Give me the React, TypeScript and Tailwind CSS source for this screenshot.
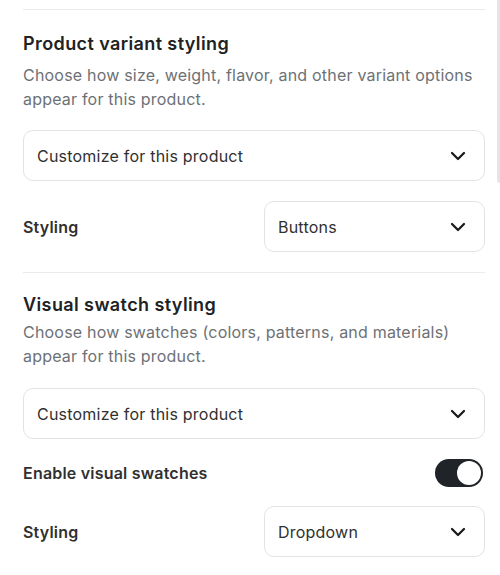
import { ChevronDown } from 'lucide-react';

interface SelectBoxProps {
    value: string;
}

const SelectBox = ({ value }: SelectBoxProps) => {
    return (
        <div className="flex h-[51px] items-center justify-between rounded-[10px] border border-[#e3e3e3] bg-white pl-[13px] pr-[14px]">
            <span className="text-[16px] tracking-[0.22px] text-[#303030]">{value}</span>
            <ChevronDown size={24} strokeWidth={2.25} className="text-[#1a1a1a]" />
        </div>
    );
};

const StylingRow = ({ value }: SelectBoxProps) => {
    return (
        <div className="grid grid-cols-2 items-center gap-5">
            <span className="text-[16px] font-semibold tracking-[0.2px] text-[#303030]">Styling</span>
            <SelectBox value={value} />
        </div>
    );
};

const Toggle = ({ on }: { on: boolean }) => {
    return (
        <div className={`flex h-7 w-12 items-center rounded-full p-[2px] ${on ? 'justify-end bg-[#202327]' : 'justify-start bg-[#d4d4d4]'}`}>
            <div className="h-6 w-6 rounded-full bg-white" />
        </div>
    );
};

export default function App() {
    return (
        <div className="relative h-[575px] w-[500px] overflow-hidden bg-white" style={{ fontFamily: 'Inter, "Noto Sans", sans-serif' }}>
            {/* scrollbar thumb */}
            <div className="absolute right-0 top-0 h-[183px] w-[3px] rounded-bl-sm bg-[#e5e5e5]" />

            <div className="ml-[23px] w-[462px] pt-[9px]">
                <div className="h-px bg-[#ebebeb]" />

                {/* Product variant styling */}
                <section className="pt-5 pb-5">
                    <h2 className="text-[18px] font-semibold leading-7 tracking-[0.4px] text-[#202223]">Product variant styling</h2>
                    <p className="mt-[5px] text-[16px] leading-6 tracking-[0.2px] text-[#6d7175]">
                        Choose how size, weight, flavor, and other variant options appear for this product.
                    </p>
                    <div className="mt-[19px]">
                        <SelectBox value="Customize for this product" />
                    </div>
                    <div className="mt-5">
                        <StylingRow value="Buttons" />
                    </div>
                </section>

                <div className="h-px bg-[#ebebeb]" />

                {/* Visual swatch styling */}
                <section className="pt-[18px]">
                    <h2 className="text-[18px] font-semibold leading-7 tracking-[0.4px] text-[#202223]">Visual swatch styling</h2>
                    <p className="mt-px text-[16px] leading-6 tracking-[0.2px] text-[#6d7175]">
                        Choose how swatches (colors, patterns, and materials) appear for this product.
                    </p>
                    <div className="mt-5">
                        <SelectBox value="Customize for this product" />
                    </div>
                    <div className="mt-5 flex h-7 items-center justify-between pr-[2px]">
                        <span className="text-[16px] font-semibold tracking-[0.2px] text-[#303030]">Enable visual swatches</span>
                        <Toggle on={true} />
                    </div>
                    <div className="mt-[19px]">
                        <StylingRow value="Dropdown" />
                    </div>
                </section>
            </div>
        </div>
    );
}
